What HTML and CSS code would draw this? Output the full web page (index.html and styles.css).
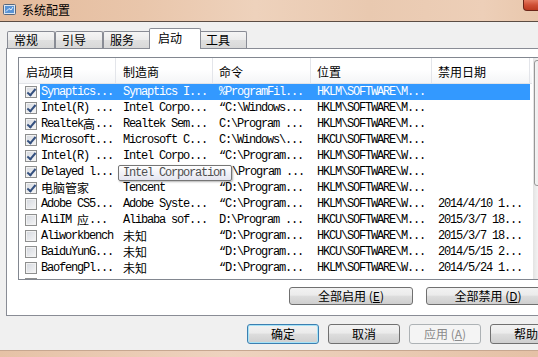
FILE: index.html
```html
<!DOCTYPE html>
<html lang="zh-CN">
<head>
    <meta charset="UTF-8">
    <title>系统配置</title>
    <link rel="stylesheet" href="styles.css">
</head>
<body>
    <div class="window">
        <div class="titlebar">
            <svg class="app-icon" width="13" height="13" viewBox="0 0 13 13">
                <rect x="0.5" y="1.5" width="12" height="10" rx="1" fill="#dfe6ee" stroke="#56677e"/>
                <rect x="2" y="3" width="9" height="7" fill="#5a93d4"/>
                <path d="M3 8.5 L6 5.5 L8 7 L10 4" fill="none" stroke="#eef5ff" stroke-width="1"/>
            </svg>
            <span class="title">系统配置</span>
            <div class="close-btn"></div>
        </div>

        <div class="dialog">
            <div class="tabs">
                <div class="tab">常规</div>
                <div class="tab">引导</div>
                <div class="tab">服务</div>
                <div class="tab active">启动</div>
                <div class="tab">工具</div>
            </div>

            <div class="tab-panel">
                <div class="listview">
                    <div class="list-main">
                        <div class="list-header">
                            <div class="hcell first">启动项目</div>
                            <div class="hcell">制造商</div>
                            <div class="hcell">命令</div>
                            <div class="hcell">位置</div>
                            <div class="hcell">禁用日期</div>
                        </div>

                        <div class="list-row selected">
                            <div class="chk checked"></div>
                            <div class="cell first">Synaptics...</div>
                            <div class="cell">Synaptics I...</div>
                            <div class="cell">%ProgramFil...</div>
                            <div class="cell">HKLM\SOFTWARE\M...</div>
                            <div class="cell"></div>
                        </div>
                        <div class="list-row">
                            <div class="chk checked"></div>
                            <div class="cell first">Intel(R) ...</div>
                            <div class="cell">Intel Corpo...</div>
                            <div class="cell">“C:\Windows...</div>
                            <div class="cell">HKLM\SOFTWARE\M...</div>
                            <div class="cell"></div>
                        </div>
                        <div class="list-row">
                            <div class="chk checked"></div>
                            <div class="cell first">Realtek<span class="cjk">高</span>...</div>
                            <div class="cell">Realtek Sem...</div>
                            <div class="cell">C:\Program ...</div>
                            <div class="cell">HKLM\SOFTWARE\M...</div>
                            <div class="cell"></div>
                        </div>
                        <div class="list-row">
                            <div class="chk checked"></div>
                            <div class="cell first">Microsoft...</div>
                            <div class="cell">Microsoft C...</div>
                            <div class="cell">C:\Windows\...</div>
                            <div class="cell">HKCU\SOFTWARE\M...</div>
                            <div class="cell"></div>
                        </div>
                        <div class="list-row">
                            <div class="chk checked"></div>
                            <div class="cell first">Intel(R) ...</div>
                            <div class="cell">Intel Corpo...</div>
                            <div class="cell">“C:\Program...</div>
                            <div class="cell">HKLM\SOFTWARE\W...</div>
                            <div class="cell"></div>
                        </div>
                        <div class="list-row">
                            <div class="chk checked"></div>
                            <div class="cell first">Delayed l...</div>
                            <div class="cell"></div>
                            <div class="cell under-tip">\Program ...</div>
                            <div class="cell">HKLM\SOFTWARE\W...</div>
                            <div class="cell"></div>
                        </div>
                        <div class="list-row">
                            <div class="chk checked"></div>
                            <div class="cell first"><span class="cjk">电脑管家</span></div>
                            <div class="cell">Tencent</div>
                            <div class="cell">“D:\Program...</div>
                            <div class="cell">HKLM\SOFTWARE\W...</div>
                            <div class="cell"></div>
                        </div>
                        <div class="list-row">
                            <div class="chk"></div>
                            <div class="cell first">Adobe CS5...</div>
                            <div class="cell">Adobe Syste...</div>
                            <div class="cell">“C:\Program...</div>
                            <div class="cell">HKLM\SOFTWARE\W...</div>
                            <div class="cell">2014/4/10 1...</div>
                        </div>
                        <div class="list-row">
                            <div class="chk"></div>
                            <div class="cell first">AliIM <span class="cjk">应</span>...</div>
                            <div class="cell">Alibaba sof...</div>
                            <div class="cell">D:\Program ...</div>
                            <div class="cell">HKCU\SOFTWARE\M...</div>
                            <div class="cell">2015/3/7 18...</div>
                        </div>
                        <div class="list-row">
                            <div class="chk"></div>
                            <div class="cell first">Aliworkbench</div>
                            <div class="cell"><span class="cjk">未知</span></div>
                            <div class="cell">“D:\Program...</div>
                            <div class="cell">HKCU\SOFTWARE\M...</div>
                            <div class="cell">2015/3/7 18...</div>
                        </div>
                        <div class="list-row">
                            <div class="chk"></div>
                            <div class="cell first">BaiduYunG...</div>
                            <div class="cell"><span class="cjk">未知</span></div>
                            <div class="cell">“D:\Program...</div>
                            <div class="cell">HKCU\SOFTWARE\M...</div>
                            <div class="cell">2014/5/15 2...</div>
                        </div>
                        <div class="list-row">
                            <div class="chk"></div>
                            <div class="cell first">BaofengPl...</div>
                            <div class="cell"><span class="cjk">未知</span></div>
                            <div class="cell">“D:\Program...</div>
                            <div class="cell">HKLM\SOFTWARE\W...</div>
                            <div class="cell">2014/5/24 1...</div>
                        </div>
                        <div class="list-row partial">
                            <div class="chk"></div>
                        </div>
                    </div>
                    <div class="vscroll">
                        <div class="thumb"><span class="grip"></span></div>
                    </div>
                    <div class="tooltip">Intel Corporation</div>
                </div>

                <div class="panel-buttons">
                    <button class="btn wide">全部启用 (<u>E</u>)</button>
                    <button class="btn wide">全部禁用 (<u>D</u>)</button>
                </div>
            </div>

            <div class="dialog-buttons">
                <button class="btn default">确定</button>
                <button class="btn">取消</button>
                <button class="btn" disabled>应用 (<u>A</u>)</button>
                <button class="btn">帮助</button>
            </div>
        </div>

        <div class="frame-bottom"></div>
    </div>
</body>
</html>
```

FILE: styles.css
```css
* {
    margin: 0;
    padding: 0;
    box-sizing: border-box;
}
html, body {
    width: 538px;
    height: 357px;
    overflow: hidden;
}
body {
    font-family: "Noto Sans CJK SC", "Liberation Sans", sans-serif;
    font-size: 12px;
    color: #000;
    background: #f0f0f0;
}
.window {
    width: 568px;
    height: 357px;
    display: flex;
    flex-direction: column;
}

/* title bar */
.titlebar {
    position: relative;
    flex: none;
    height: 22px;
    display: flex;
    align-items: center;
    padding-left: 3px;
    background: linear-gradient(90deg, #e4bb9c, #e9c6ab 25%, #eed2bc 45%, #e9c9b0 65%, #edcfb8 85%, #e7c3a6);
    border-bottom: 1px solid #5c4d44;
}
.app-icon {
    margin-right: 6px;
    margin-top: -2px;
}
.title {
    line-height: 14px;
    margin-top: -2px;
}
.close-btn {
    position: absolute;
    right: 2px;
    top: 0;
    width: 43px;
    height: 11px;
    border: 1px solid #6b2518;
    border-top: none;
    border-radius: 0 0 4px 4px;
    background: linear-gradient(#e47b61, #cf4f35 50%, #bb3a20);
}

/* dialog body */
.dialog {
    flex: 1;
    display: flex;
    flex-direction: column;
    padding: 0 6px;
    background: #f0f0f0;
}
.tabs {
    height: 26px;
    display: flex;
    align-items: flex-end;
    padding-left: 1px;
}
.tab {
    width: 48px;
    height: 17px;
    padding-left: 6px;
    line-height: 16px;
    border: 1px solid #898c95;
    border-bottom: none;
    border-radius: 2px 2px 0 0;
    background: linear-gradient(#f5f5f5, #ebebeb 50%, #e0e0e0 51%, #d8d8d8);
}
.tab.active {
    position: relative;
    z-index: 1;
    width: 52px;
    height: 21px;
    margin: 0 -2px -1px;
    padding-left: 8px;
    line-height: 18px;
    background: #fff;
}
.tab-panel {
    height: 268px;
    display: flex;
    flex-direction: column;
    padding: 8px 11px 10px;
    border: 1px solid #898c95;
    background: #fff;
}

/* list view */
.listview {
    position: relative;
    height: 223px;
    display: flex;
    border: 1px solid #828790;
}
.list-main {
    flex: 1;
    overflow: hidden;
}
.list-header {
    display: grid;
    grid-template-columns: 97px 97px 98px 121px 98px;
    height: 26px;
    border-bottom: 1px solid #e2e4e8;
    background: linear-gradient(#ffffff, #ffffff 45%, #f4f5f7);
}
.hcell {
    padding: 6px 0 0 6px;
    line-height: 16px;
    white-space: nowrap;
    border-right: 1px solid #e3e5ea;
}
.hcell.first {
    padding-left: 7px;
}
.hcell:nth-child(2) {
    padding-left: 7px;
}
.list-row {
    display: grid;
    grid-template-columns: 21px 77px 96px 98px 121px 98px;
    height: 16px;
    line-height: 16px;
    font-family: "Liberation Mono", "Noto Sans CJK SC", monospace;
    font-size: 12px;
    letter-spacing: -1.2px;
}
.cell {
    height: 16px;
    padding-left: 6px;
    white-space: nowrap;
}
.cell.first {
    padding-left: 1px;
}
.cell.under-tip {
    padding-left: 19px;
}
.list-row.selected .cell {
    background: #3399ff;
    color: #fff;
}
.cjk {
    display: inline-block;
    vertical-align: top;
    height: 16px;
    font-family: "Noto Sans CJK SC", sans-serif;
    font-size: 12px;
    letter-spacing: 0;
    line-height: 16px;
    overflow: hidden;
}
.chk {
    position: relative;
    width: 12px;
    height: 12px;
    margin: 2px 0 0 6px;
    border: 1px solid #8e8f8f;
    background: linear-gradient(135deg, #d3d7de, #f6f6f6);
    box-shadow: inset 0 0 0 1px #f2f2f2;
}
.chk.checked::after {
    content: "";
    position: absolute;
    left: 3px;
    top: 0;
    width: 3px;
    height: 7px;
    border: solid #34507f;
    border-width: 0 2px 2px 0;
    transform: rotate(40deg);
}
.vscroll {
    position: relative;
    flex: none;
    width: 17px;
    background: linear-gradient(90deg, #e3e3e3, #f2f2f2 30%, #f2f2f2 70%, #e8e8e8);
    border-left: 1px solid #fff;
}
.thumb {
    position: absolute;
    left: 1px;
    top: 2px;
    width: 15px;
    height: 126px;
    border: 1px solid #979797;
    border-radius: 3px;
    background: linear-gradient(90deg, #f3f3f3, #e8e8e8 50%, #d9d9d9);
}
.grip {
    position: absolute;
    left: 4px;
    top: 58px;
    width: 6px;
    height: 7px;
    border-top: 1px solid #8a8a8a;
    border-bottom: 1px solid #8a8a8a;
}
.grip::after {
    content: "";
    position: absolute;
    left: 0;
    top: 2px;
    width: 6px;
    border-top: 1px solid #8a8a8a;
}
.tooltip {
    position: absolute;
    left: 99px;
    top: 107px;
    width: 114px;
    height: 16px;
    padding-left: 4px;
    line-height: 14px;
    font-family: "Liberation Mono", monospace;
    font-size: 12px;
    letter-spacing: -1.2px;
    color: #4f4f4f;
    border: 1px solid #767676;
    border-radius: 2px;
    background: linear-gradient(#ffffff, #e4e5f0);
    box-shadow: 1px 1px 2px rgba(0, 0, 0, 0.3);
}

/* buttons */
.panel-buttons {
    margin-top: 7px;
    display: flex;
    justify-content: flex-end;
    gap: 13px;
}
.dialog-buttons {
    margin-top: 8px;
    display: flex;
    justify-content: flex-end;
    gap: 9px;
}
.btn {
    width: 72px;
    height: 20px;
    padding: 0;
    font-family: "Noto Sans CJK SC", sans-serif;
    font-size: 12px;
    line-height: 16px;
    color: #000;
    border: 1px solid #707070;
    border-radius: 3px;
    background: linear-gradient(#f2f2f2, #ebebeb 45%, #dddddd 50%, #cfcfcf);
}
.btn.wide {
    width: 124px;
    height: 18px;
    line-height: 14px;
}
.btn.default {
    border-color: #3c7fb1;
    box-shadow: inset 0 0 0 1px #a6e3f7;
}
.btn:disabled {
    color: #8a8a8a;
    border-color: #adb2b5;
    background: #f4f4f4;
}
.frame-bottom {
    flex: none;
    height: 7px;
    border-top: 1px solid #c7a790;
    background: linear-gradient(90deg, #e6c2a6, #eed3bf 40%, #e9cab2 70%, #e4bfa3);
}
```
